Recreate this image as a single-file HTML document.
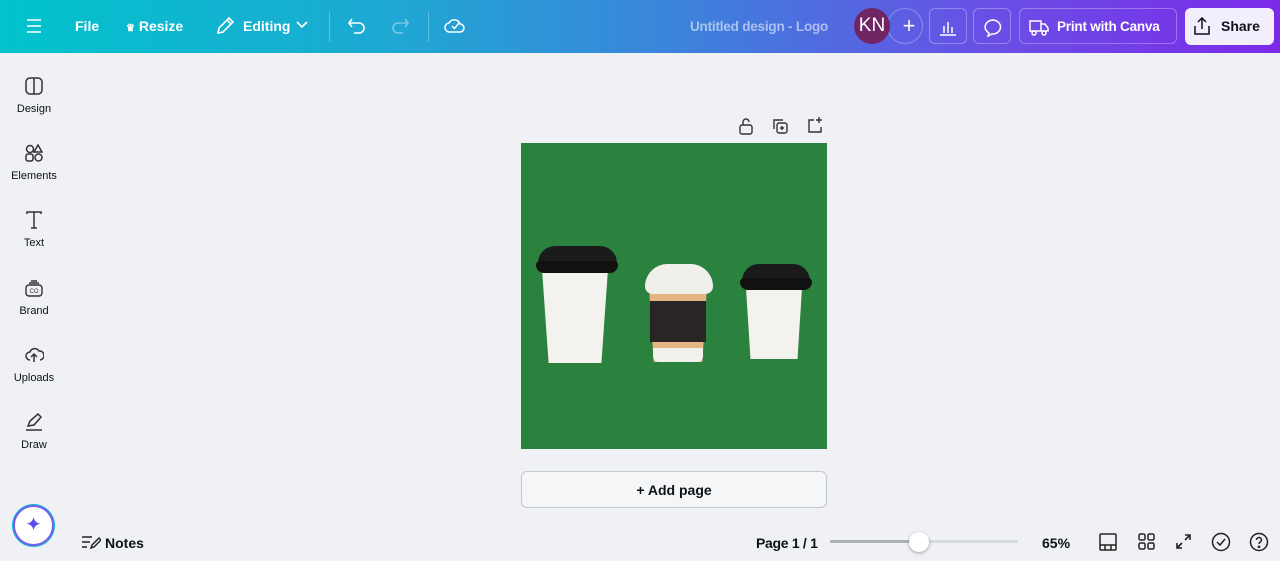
<!DOCTYPE html>
<html><head><meta charset="utf-8"><style>
*{box-sizing:border-box;margin:0;padding:0}
body{width:1280px;height:561px;overflow:hidden;background:#f0f1f5;font-family:"Liberation Sans",sans-serif;position:relative;color:#0d1216}
.top{position:absolute;left:0;top:0;width:1280px;height:53px;background:linear-gradient(90deg,#00c3cc 0%,#1ea9d3 30%,#3f7fdc 55%,#6a4ee6 78%,#7c2ae8 100%);color:#fff;font-weight:bold;font-size:14px}
.top>*{position:absolute}
.btn{border:1px solid rgba(255,255,255,.3);border-radius:6px;height:36px;top:8px}
.side{position:absolute;left:0;top:58px;width:68px}
.si{position:absolute;left:0;width:68px;text-align:center;font-size:11px;color:#0d1216}
.si svg{display:block;margin:0 auto 7px}
.cup{position:absolute}
</style></head><body>
<div class="top">
 <svg style="left:26px;top:18px" width="16" height="16" stroke="#fff" stroke-width="1.6"><path d="M1 2h14M1 8h14M1 14h14"/></svg>
 <span style="left:75px;top:18px">File</span>
 <span style="left:126px;top:18px"><span style="font-size:10px">♛</span> Resize</span>
 <svg style="left:215px;top:16px" width="20" height="20" fill="none" stroke="#fff" stroke-width="1.6"><path d="M3 17l1-5L14 2l4 4L8 16z M12 4l4 4"/></svg>
 <span style="left:243px;top:18px">Editing</span>
 <svg style="left:296px;top:21px" width="12" height="8" fill="none" stroke="#fff" stroke-width="1.6"><path d="M1 1l5 5 5-5"/></svg>
 <div style="left:329px;top:12px;width:1px;height:30px;background:rgba(255,255,255,.3)"></div>
 <svg style="left:347px;top:16px" width="20" height="20" fill="none" stroke="#fff" stroke-width="1.6"><path d="M5 3L2 7l3 4M2 7h10a5 5 0 010 10H7"/></svg>
 <svg style="left:390px;top:16px" width="20" height="20" fill="none" stroke="rgba(255,255,255,.4)" stroke-width="1.6"><path d="M15 3l3 4-3 4M18 7H8a5 5 0 000 10h5"/></svg>
 <div style="left:428px;top:12px;width:1px;height:30px;background:rgba(255,255,255,.3)"></div>
 <svg style="left:444px;top:15px" width="22" height="20" fill="none" stroke="#fff" stroke-width="1.5"><path d="M6 17h10a4 4 0 000-8 6 6 0 00-11-1 4.5 4.5 0 001 9z M8 11l2.5 2.5L15 8"/></svg>
 <span style="left:690px;top:19px;color:rgba(255,255,255,.55);font-size:13.5px;letter-spacing:-.2px">Untitled design - Logo</span>
 <div style="left:887px;top:8px;width:36px;height:36px;border-radius:50%;border:1px solid rgba(255,255,255,.3);text-align:center;line-height:33px;font-size:22px;font-weight:normal;padding-left:8px">+</div>
 <div style="left:854px;top:8px;width:36px;height:36px;border-radius:50%;background:#6f2563;text-align:center;line-height:36px;font-size:19px;font-weight:normal">KN</div>
 <div class="btn" style="left:929px;width:38px"><svg style="margin:9px" width="18" height="18" fill="none" stroke="#fff" stroke-width="1.5"><path d="M1 17h16M5 15V8M9 15V4M13 15V9"/></svg></div>
 <div class="btn" style="left:973px;width:38px"><svg style="margin:9px" width="20" height="20" fill="none" stroke="#fff" stroke-width="1.5"><path d="M10 2a8 7 0 00-4 13l-1 3 4-2a8 7 0 101-14z"/></svg></div>
 <div class="btn" style="left:1019px;width:158px"><svg style="position:absolute;left:9px;top:9px" width="20" height="18" fill="none" stroke="#fff" stroke-width="1.5"><path d="M1 3h11v10H1zM12 6h4l3 4v3h-7"/><circle cx="5" cy="15" r="2"/><circle cx="15" cy="15" r="2"/></svg><span style="position:absolute;left:37px;top:10px;font-size:13.5px;letter-spacing:-.2px">Print with Canva</span></div>
 <div style="left:1185px;top:8px;width:89px;height:37px;background:#f3eefd;border-radius:6px;color:#0d1216"><svg style="position:absolute;left:8px;top:9px" width="18" height="18" fill="none" stroke="#0d1216" stroke-width="1.5"><path d="M9 12V1M5 5l4-4 4 4M2 9v8h14V9"/></svg><span style="position:absolute;left:36px;top:10px">Share</span></div>
</div>
<div class="side">
 <div class="si" style="top:18px"><svg width="20" height="20" fill="none" stroke="#333" stroke-width="1.5"><rect x="2" y="2" width="16" height="16" rx="4"/><path d="M10 2v16"/></svg>Design</div>
 <div class="si" style="top:85px"><svg width="20" height="20" fill="none" stroke="#333" stroke-width="1.5"><circle cx="6" cy="6" r="3.5"/><path d="M14 2l4 7h-8z"/><rect x="2" y="11" width="7" height="7" rx="2"/><rect x="11" y="11" width="7" height="7" rx="3.5"/></svg>Elements</div>
 <div class="si" style="top:152px"><svg width="20" height="20" fill="none" stroke="#333" stroke-width="1.5"><path d="M3 4V2h14v2M10 2v16M7 18h6"/></svg>Text</div>
 <div class="si" style="top:220px"><svg width="20" height="20" fill="none" stroke="#333" stroke-width="1.4"><rect x="2" y="7" width="16" height="11" rx="3"/><path d="M5 5h10M7 3h6"/><text x="10" y="15" font-size="6" text-anchor="middle" fill="#333" stroke="none" font-family="Liberation Sans">CO</text></svg>Brand</div>
 <div class="si" style="top:287px"><svg width="20" height="20" fill="none" stroke="#333" stroke-width="1.5"><path d="M6 15a4 4 0 010-8 5 5 0 019-1 4 4 0 011 9M10 17V10M7 12l3-3 3 3"/></svg>Uploads</div>
 <div class="si" style="top:354px"><svg width="20" height="20" fill="none" stroke="#333" stroke-width="1.5"><path d="M4 14l2-5 8-7 3 3-7 8zM2 18h16"/></svg>Draw</div>
</div>
<div style="position:absolute;left:13px;top:505px;width:41px;height:41px;border-radius:50%;background:#fff;border:2px solid #7d5cf0;box-shadow:0 0 0 1px #0bc;text-align:center;line-height:37px;color:#5a4ee8;font-size:20px">✦</div>
<svg style="position:absolute;left:738px;top:117px" width="16" height="18" fill="none" stroke="#333" stroke-width="1.4"><rect x="2" y="8" width="12" height="9" rx="2"/><path d="M5 8V5a3 3 0 016 0"/></svg>
<svg style="position:absolute;left:772px;top:118px" width="17" height="17" fill="none" stroke="#333" stroke-width="1.4"><rect x="5" y="5" width="10" height="10" rx="2"/><path d="M2 11V2h9M10 8v4M8 10h4"/></svg>
<svg style="position:absolute;left:806px;top:116px" width="17" height="17" fill="none" stroke="#333" stroke-width="1.4"><path d="M8 4H3v12h12v-5M13 1v6M10 4h6"/></svg>
<div style="position:absolute;left:521px;top:143px;width:306px;height:306px;background:#2b823e">
 <div class="cup" style="left:21px;top:126px;width:66px;height:94px;background:#f4f2ee;clip-path:polygon(0 0,100% 0,90% 100%,10% 100%);border-radius:2px"></div>
 <div class="cup" style="left:17px;top:103px;width:79px;height:20px;background:#1b1b1b;border-radius:24px 24px 4px 4px"></div>
 <div class="cup" style="left:15px;top:118px;width:82px;height:12px;background:#111;border-radius:4px 4px 8px 8px"></div>
 <div class="cup" style="left:128px;top:143px;width:58px;height:76px;background:#e6b584;clip-path:polygon(0 0,100% 0,92% 100%,8% 100%)"></div>
 <div class="cup" style="left:129px;top:158px;width:56px;height:41px;background:#2a2525"></div>
 <div class="cup" style="left:132px;top:205px;width:50px;height:14px;background:#f2f0ec;border-radius:0 0 6px 6px"></div>
 <div class="cup" style="left:124px;top:121px;width:68px;height:30px;background:#f1efea;border-radius:24px 24px 8px 8px"></div>
 <div class="cup" style="left:225px;top:145px;width:56px;height:71px;background:#f4f2ee;clip-path:polygon(0 0,100% 0,92% 100%,8% 100%)"></div>
 <div class="cup" style="left:221px;top:121px;width:68px;height:20px;background:#1b1b1b;border-radius:22px 22px 4px 4px"></div>
 <div class="cup" style="left:219px;top:135px;width:72px;height:12px;background:#111;border-radius:4px 4px 8px 8px"></div>
</div>
<div style="position:absolute;left:521px;top:471px;width:306px;height:37px;border:1px solid #c4c7cc;border-radius:6px;background:#f5f6f8;text-align:center;line-height:36px;font-size:14px;font-weight:bold">+ Add page</div>
<svg style="position:absolute;left:81px;top:534px" width="20" height="16" fill="none" stroke="#222" stroke-width="1.5"><path d="M1 3h10M1 8h8M1 13h5M10 14l1-3 7-7 2 2-7 7z"/></svg>
<span style="position:absolute;left:105px;top:535px;font-size:14px;font-weight:bold">Notes</span>
<span style="position:absolute;left:756px;top:535px;font-size:14px;font-weight:bold;letter-spacing:-.3px">Page 1 / 1</span>
<div style="position:absolute;left:830px;top:540px;width:188px;height:3px;background:#d6d9dd;border-radius:2px"></div>
<div style="position:absolute;left:830px;top:540px;width:90px;height:3px;background:#a9b0b8;border-radius:2px"></div>
<div style="position:absolute;left:909px;top:532px;width:20px;height:20px;border-radius:50%;background:#fff;box-shadow:0 1px 3px rgba(0,0,0,.35)"></div>
<span style="position:absolute;left:1042px;top:535px;font-size:14px;font-weight:bold">65%</span>
<svg style="position:absolute;left:1099px;top:533px" width="18" height="18" fill="none" stroke="#222" stroke-width="1.5"><rect x="1" y="1" width="16" height="16" rx="1"/><path d="M1 12h16M6 12v5M12 12v5"/></svg>
<svg style="position:absolute;left:1138px;top:533px" width="17" height="17" fill="none" stroke="#222" stroke-width="1.5"><rect x="1" y="1" width="6" height="6" rx="1.5"/><rect x="10" y="1" width="6" height="6" rx="1.5"/><rect x="1" y="10" width="6" height="6" rx="1.5"/><rect x="10" y="10" width="6" height="6" rx="1.5"/></svg>
<svg style="position:absolute;left:1175px;top:533px" width="17" height="17" fill="none" stroke="#222" stroke-width="1.6"><path d="M10 2h5v5M15 2l-5 5M2 10v5h5M2 15l5-5"/></svg>
<svg style="position:absolute;left:1211px;top:532px" width="20" height="20" fill="none" stroke="#222" stroke-width="1.5"><circle cx="10" cy="10" r="8.5"/><path d="M6 10l3 3 5-6"/></svg>
<svg style="position:absolute;left:1249px;top:532px" width="20" height="20" fill="none" stroke="#222" stroke-width="1.5"><circle cx="10" cy="10" r="8.5"/><path d="M7.5 8a2.5 2.5 0 115 0c0 2-2.5 2-2.5 4"/><circle cx="10" cy="14.8" r=".6" fill="#222"/></svg>
</body></html>
